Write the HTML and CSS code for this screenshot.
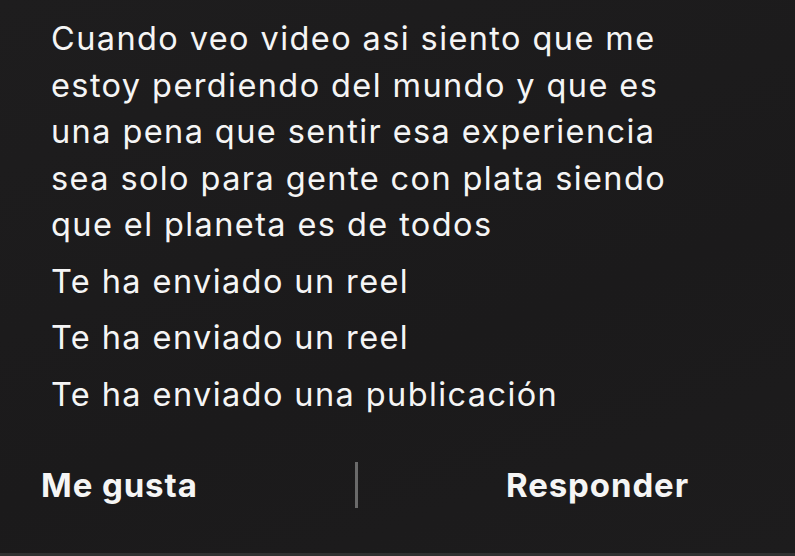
FILE: index.html
```html
<!DOCTYPE html>
<html lang="es">
<head>
<meta charset="utf-8">
<link rel="stylesheet" href="styles.css">
</head>
<body>
<div class="screen">
  <div class="messages">
    <p class="msg">Cuando veo video asi siento que me estoy perdiendo del mundo y que es una pena que sentir esa experiencia sea solo para gente con plata siendo que el planeta es de todos</p>
    <p class="msg">Te ha enviado un reel</p>
    <p class="msg">Te ha enviado un reel</p>
    <p class="msg">Te ha enviado una publicación</p>
  </div>
  <div class="actions">
    <div class="action left">Me gusta</div>
    <div class="divider"></div>
    <div class="action right">Responder</div>
  </div>
</div>
</body>
</html>
```
FILE: styles.css
```css
html, body {
  margin: 0;
  padding: 0;
  background: #1c1b1c;
}
.screen {
  width: 795px;
  height: 556px;
  box-sizing: border-box;
  background: linear-gradient(160deg, #1e1d1e 0%, #1b1a1b 60%, #1d1c1d 100%);
  border-bottom: 3px solid #303030;
  font-family: Inter, "Noto Sans", sans-serif;
  color: #f5f5f5;
  display: flex;
  flex-direction: column;
  overflow: hidden;
}
.messages {
  padding: 16px 0 0 51px;
  width: 625px;
}
.msg {
  margin: 0 0 10px 0;
  font-size: 32.5px;
  line-height: 46.5px;
  letter-spacing: 1.4px;
}
.actions {
  margin-top: auto;
  height: 46px;
  margin-bottom: 45px;
  display: flex;
  align-items: center;
}
.action {
  font-weight: 700;
  font-size: 33px;
  letter-spacing: 0.9px;
}
.left {
  padding-left: 41px;
  width: 314px;
}
.divider {
  width: 3px;
  height: 46px;
  background: #6a6a6a;
}
.right {
  padding-left: 148px;
}
```
